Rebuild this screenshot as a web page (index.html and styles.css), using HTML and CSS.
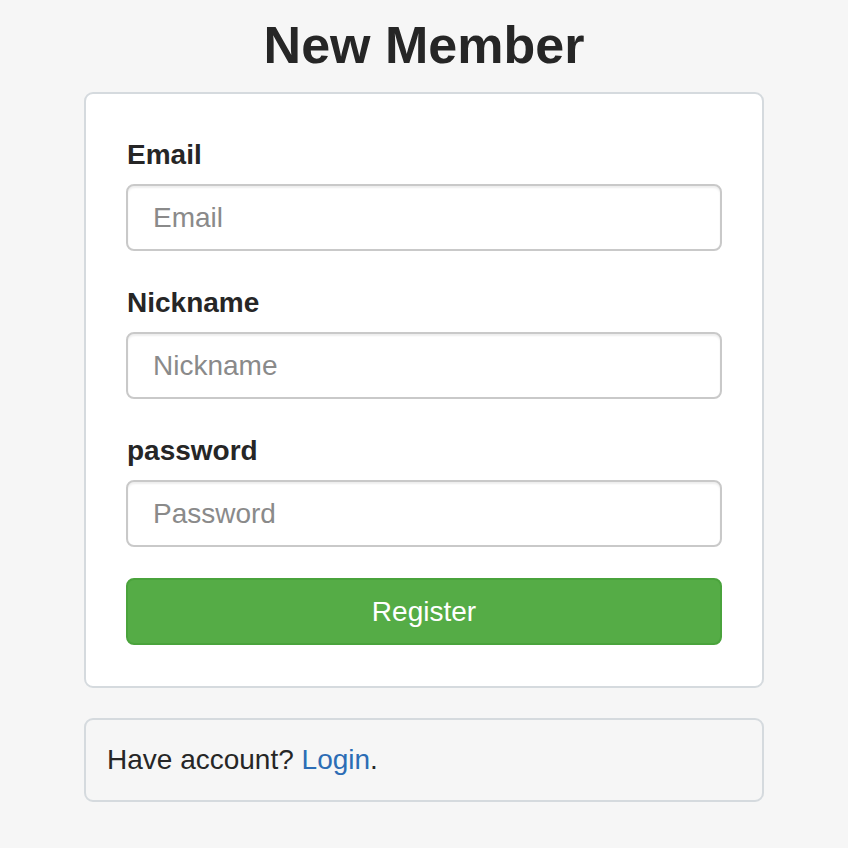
FILE: index.html
```html
<!DOCTYPE html>
<html lang="en">
<head>
<meta charset="utf-8">
<title>New Member</title>
<link rel="stylesheet" href="styles.css">
</head>
<body>
<main class="page">
  <h1 class="title">New Member</h1>
  <form class="card">
    <div class="group">
      <label class="label" for="email">Email</label>
      <input class="input" id="email" type="text" placeholder="Email">
    </div>
    <div class="group">
      <label class="label" for="nick">Nickname</label>
      <input class="input" id="nick" type="text" placeholder="Nickname">
    </div>
    <div class="group group-last">
      <label class="label" for="pw">password</label>
      <input class="input" id="pw" type="password" placeholder="Password">
    </div>
    <button class="btn" type="button">Register</button>
  </form>
  <div class="card card-alt">Have account? <a class="link" href="#">Login</a>.</div>
</main>
</body>
</html>
```

FILE: styles.css
```css
* { box-sizing: border-box; }
html, body {
  margin: 0;
  padding: 0;
  background: #f6f6f6;
}
body {
  font-family: "Liberation Sans", Arial, Helvetica, sans-serif;
  color: #262626;
  font-size: 28px;
  line-height: 40px;
}
.page {
  width: 680px;
  margin: 0 auto;
  padding-top: 15px;
}
.title {
  margin: 0 0 17px;
  font-size: 52px;
  line-height: 60px;
  font-weight: bold;
  text-align: center;
  color: #262626;
}
.card {
  display: flex;
  flex-direction: column;
  background: #fff;
  border: 2px solid #d5dade;
  border-radius: 9px;
  padding: 41px 40px;
  margin: 0 0 30px;
}
.card-alt {
  display: block;
  background: #f6f6f6;
  padding: 20px 21px;
}
.group {
  display: flex;
  flex-direction: column;
  margin-bottom: 32px;
}
.group-last { margin-bottom: 31px; }
.label {
  font-weight: bold;
  margin-bottom: 9px;
  padding-left: 1px;
  line-height: 40px;
}
.input {
  height: 67px;
  width: 100%;
  border: 2px solid #c9c9c9;
  border-radius: 8px;
  padding: 0 25px;
  font-family: inherit;
  font-size: 28px;
  color: #555;
  background: #fff;
  box-shadow: inset 0 2px 2px rgba(0,0,0,0.07);
  outline: none;
}
.input::placeholder { color: #8a8a8a; }
.btn {
  height: 67px;
  width: 100%;
  border: 2px solid #4aa33c;
  border-radius: 8px;
  background: #55ac46;
  color: #fff;
  font-family: inherit;
  font-size: 28px;
  padding: 0;
}
.link {
  color: #2c6db5;
  text-decoration: none;
}
```
